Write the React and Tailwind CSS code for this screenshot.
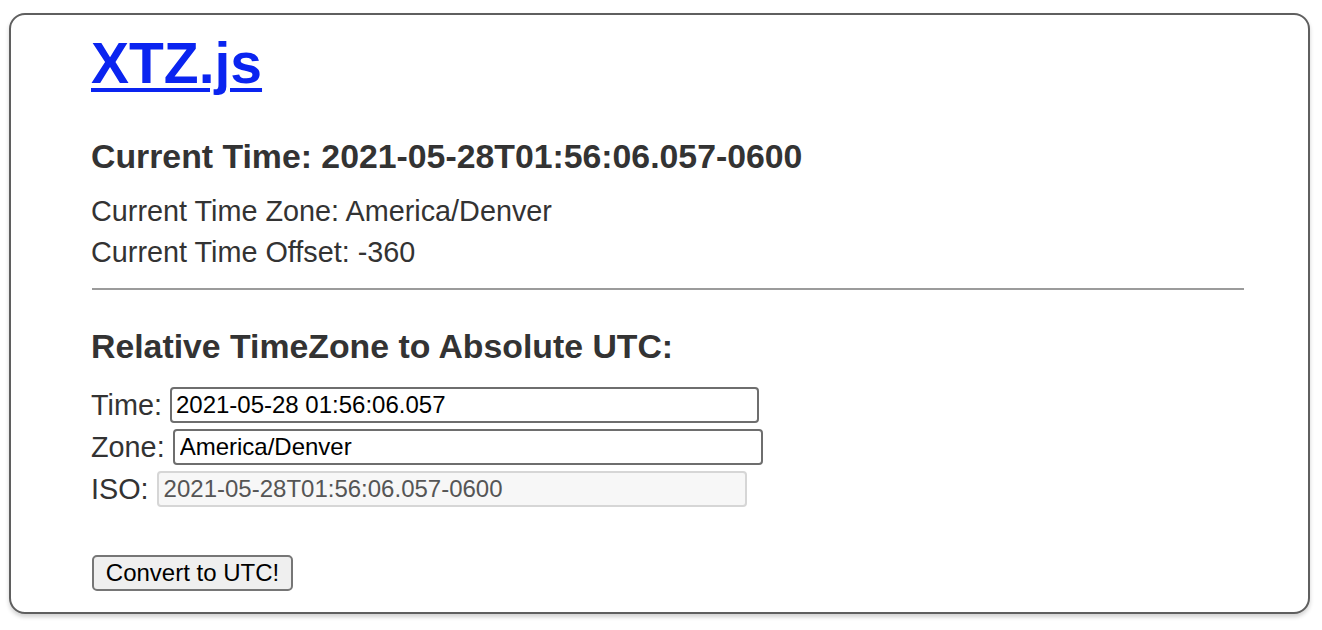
import React from "react";

export default function App() {
  const font = { fontFamily: '"Liberation Sans", Arial, Helvetica, sans-serif' };
  return (
    <div className="w-[1322px] h-[630px] bg-white pt-[13px] pl-[9px]" style={font}>
      <div className="w-[1301px] h-[601px] border-2 border-[#5f5f5f] rounded-[16px] shadow-[0_3px_4px_rgba(0,0,0,0.18)] bg-white pl-[80px] pr-[64px] pt-[16px] text-[#333]">
        <h1 className="text-[57px] leading-[64px] font-bold">
          <a href="#" className="text-[#0a24f0] underline decoration-[4px] underline-offset-[5px]">XTZ.js</a>
        </h1>
        <h3 className="mt-[41px] text-[33.8px] leading-[40px] font-bold">
          Current Time: 2021-05-28T01:56:06.057-0600
        </h3>
        <div className="mt-[15px] text-[28.8px] leading-[41px]">Current Time Zone: America/Denver</div>
        <div className="text-[28.8px] leading-[41px]">Current Time Offset: -360</div>
        <hr className="mt-[15px] border-0 border-t-2 border-[#9b9b9b] ml-[1px]" />
        <h3 className="mt-[36px] text-[33.8px] leading-[40px] font-bold">
          Relative TimeZone to Absolute UTC:
        </h3>
        <div className="mt-[18px] text-[28.8px]">
          <div className="h-[42px] flex items-center">
            <span className="leading-[32px]">Time:</span>
            <input
              readOnly
              value="2021-05-28 01:56:06.057"
              className="ml-[8px] w-[589px] h-[36px] border-2 border-[#6e6e6e] rounded-[4px] px-[4px] text-[24px] text-black bg-white outline-none"
              style={font}
            />
          </div>
          <div className="h-[42px] flex items-center">
            <span className="leading-[32px]">Zone:</span>
            <input
              readOnly
              value="America/Denver"
              className="ml-[8px] w-[590px] h-[36px] border-2 border-[#6e6e6e] rounded-[4px] px-[5px] text-[24px] text-black bg-white outline-none"
              style={font}
            />
          </div>
          <div className="h-[42px] flex items-center">
            <span className="leading-[32px]">ISO:</span>
            <input
              disabled
              value="2021-05-28T01:56:06.057-0600"
              className="ml-[8px] w-[590px] h-[36px] border-2 border-[#d6d6d6] rounded-[4px] px-[5px] text-[24px] text-[#555] bg-[#f7f7f7] outline-none"
              style={font}
            />
          </div>
        </div>
        <button
          className="mt-[45px] ml-[1px] h-[36px] w-[201px] border-2 border-[#767676] rounded-[5px] bg-[#efefef] text-[24px] text-black leading-[30px]"
          style={font}
        >
          Convert to UTC!
        </button>
      </div>
    </div>
  );
}
